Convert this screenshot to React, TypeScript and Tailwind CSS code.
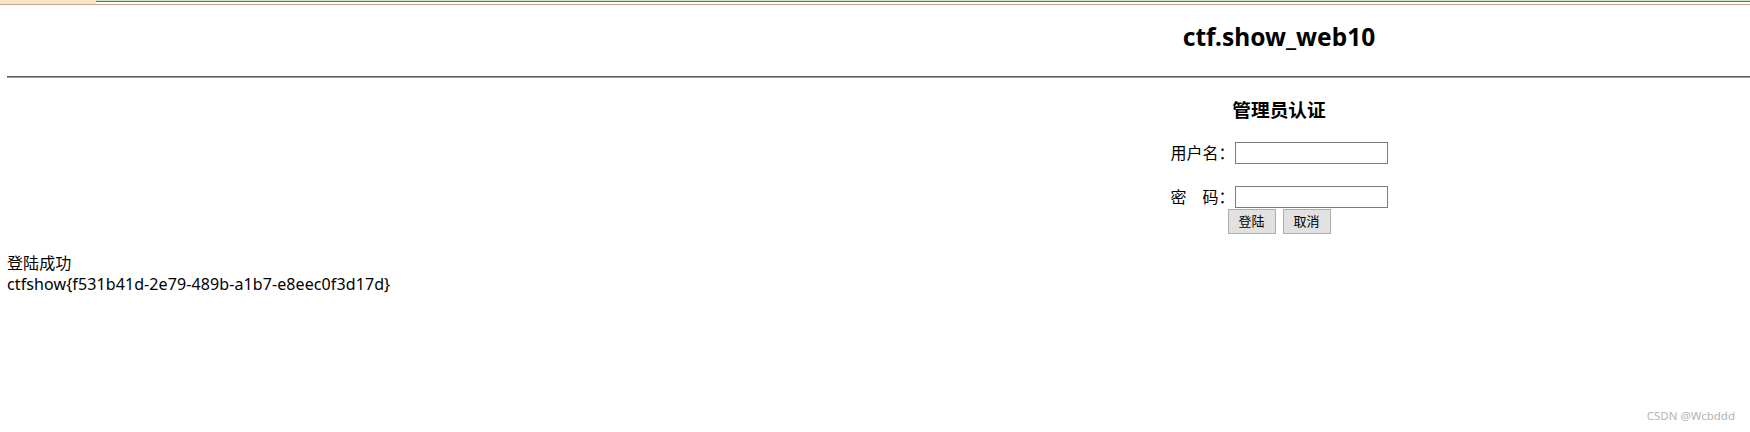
import React from "react";

const sans = "font-['Noto_Sans','Noto_Sans_CJK_SC',sans-serif]";

function TopStrip() {
  return (
    <div className="flex h-[5px] w-full">
      <div className="w-[96px] border-b border-[#c9a88c] bg-[#f6e7c9]" />
      <div className="flex-1 flex flex-col">
        <div className="h-px bg-[#cfe5c6]" />
        <div className="h-px bg-[#3f8a3a]" />
        <div className="h-[2px] bg-white" />
        <div className="h-px bg-[#c4a58a]" />
      </div>
    </div>
  );
}

function Field({ label }: { label: React.ReactNode }) {
  return (
    <div className="flex items-center">
      <span className="w-[64px] text-[16px] leading-[22px] text-left">{label}</span>
      <input
        type="text"
        className="w-[153px] h-[22px] border border-[#7a7a7a] bg-white outline-none px-1 text-[13px]"
      />
    </div>
  );
}

export default function App() {
  return (
    <div className={`relative min-h-[432px] bg-white text-black ${sans}`}>
      <TopStrip />
      <div className="pl-[7px]">
        <div className="ml-auto mr-[7px] w-[928px] text-center pt-[16px]">
          <h2 className="text-[24.5px] leading-[32px] font-bold">ctf.show_web10</h2>
        </div>
        <hr className="mt-[23px] h-0 border-0 border-t border-b border-t-[#5e5e5e] border-b-[#9a9a9a]" />
        <div className="ml-auto mr-[7px] w-[928px] flex flex-col items-center pt-[20px]">
          <h3 className="text-[18.72px] leading-[24px] font-bold">管理员认证</h3>
          <form className="flex flex-col items-center mt-[20px]" onSubmit={(e) => e.preventDefault()}>
            <Field label="用户名：" />
            <div className="h-[22px]" />
            <Field label="密　码：" />
            <div className="flex gap-[7px] mt-px">
              <button
                type="submit"
                className="w-[48px] h-[25px] bg-[#e1e1e1] border border-[#adadad] text-[13px] leading-none"
              >
                登陆
              </button>
              <button
                type="reset"
                className="w-[48px] h-[25px] bg-[#e1e1e1] border border-[#adadad] text-[13px] leading-none"
              >
                取消
              </button>
            </div>
          </form>
        </div>
        <div className="mt-[19px] text-[16px] leading-[21px] tracking-[0.1px]">
          <div>登陆成功</div>
          <div>ctfshow{"{"}f531b41d-2e79-489b-a1b7-e8eec0f3d17d{"}"}</div>
        </div>
      </div>
      <div className="absolute right-[15px] bottom-[9px] text-[11.5px] leading-[14px] text-[#b3b3b3]">
        CSDN @Wcbddd
      </div>
    </div>
  );
}
